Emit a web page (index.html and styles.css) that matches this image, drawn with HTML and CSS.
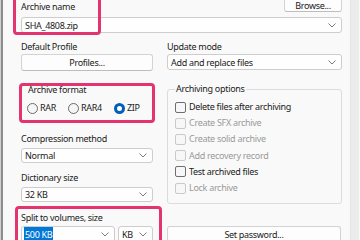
FILE: index.html
```html
<!DOCTYPE html>
<html>
<head>
<meta charset="utf-8">
<link rel="stylesheet" href="styles.css">
</head>
<body>
<div class="window">
  <div class="dialog">
    <div class="toprow">
      <span class="label">Archive name</span>
      <button class="btn browse">Browse...</button>
    </div>
    <div class="combo name"><span class="val">SHA_4808.zip</span><svg class="chev" width="8" height="5" viewBox="0 0 8 5"><polyline points="0.5,0.5 4,4 7.5,0.5" fill="none" stroke="#7a7a7a" stroke-width="1"/></svg></div>
    <div class="cols">
      <div class="col">
        <div class="label">Default Profile</div>
        <button class="btn profiles">Profiles...</button>
        <fieldset class="group fmt">
          <legend>Archive format</legend>
          <div class="radios">
            <span class="radio"><span class="circle"></span>RAR</span>
            <span class="radio"><span class="circle"></span>RAR4</span>
            <span class="radio"><span class="circle on"></span>ZIP</span>
          </div>
        </fieldset>
        <div class="label cm">Compression method</div>
        <div class="combo c1"><span class="val">Normal</span><svg class="chev" width="8" height="5" viewBox="0 0 8 5"><polyline points="0.5,0.5 4,4 7.5,0.5" fill="none" stroke="#7a7a7a" stroke-width="1"/></svg></div>
        <div class="label ds">Dictionary size</div>
        <div class="combo c2"><span class="val">32 KB</span><svg class="chev" width="8" height="5" viewBox="0 0 8 5"><polyline points="0.5,0.5 4,4 7.5,0.5" fill="none" stroke="#7a7a7a" stroke-width="1"/></svg></div>
        <div class="label sv">Split to volumes, size</div>
        <div class="splitrow">
          <div class="combo size"><span class="val"><span class="sel">500 KB</span></span><svg class="chev" width="8" height="5" viewBox="0 0 8 5"><polyline points="0.5,0.5 4,4 7.5,0.5" fill="none" stroke="#7a7a7a" stroke-width="1"/></svg></div>
          <div class="combo unit"><span class="val">KB</span><svg class="chev" width="8" height="5" viewBox="0 0 8 5"><polyline points="0.5,0.5 4,4 7.5,0.5" fill="none" stroke="#7a7a7a" stroke-width="1"/></svg></div>
        </div>
      </div>
      <div class="col">
        <div class="label">Update mode</div>
        <div class="combo upd"><span class="val">Add and replace files</span><svg class="chev" width="8" height="5" viewBox="0 0 8 5"><polyline points="0.5,0.5 4,4 7.5,0.5" fill="none" stroke="#7a7a7a" stroke-width="1"/></svg></div>
        <fieldset class="group opts">
          <legend>Archiving options</legend>
          <div class="check"><span class="box"></span>Delete files after archiving</div>
          <div class="check off"><span class="box"></span>Create SFX archive</div>
          <div class="check off"><span class="box"></span>Create solid archive</div>
          <div class="check off"><span class="box"></span>Add recovery record</div>
          <div class="check"><span class="box"></span>Test archived files</div>
          <div class="check off"><span class="box"></span>Lock archive</div>
        </fieldset>
        <button class="btn pwd">Set password...</button>
      </div>
    </div>
  </div>
  <div class="strip"></div>
  <div class="hl hl-name"></div>
  <div class="hl hl-fmt"></div>
  <div class="hl hl-split"></div>
</div>
</body>
</html>
```

FILE: styles.css
```css
html, body {
  margin: 0;
  padding: 0;
}
body {
  width: 360px;
  height: 240px;
  overflow: hidden;
  background: #f9f9f9;
  font-family: "Noto Sans", "Open Sans", sans-serif;
  font-size: 9px;
  letter-spacing: -0.3px;
  color: #1b1b1b;
}
.window {
  position: relative;
  width: 360px;
  height: 240px;
  display: flex;
  border-left: 1px solid #cfcfcf;
  box-sizing: border-box;
}
.dialog {
  border-left: 2px solid #8d8d8d;
  width: 349px;
  box-sizing: border-box;
  padding-left: 18px;
  margin-top: -5px;
  background: #f9f9f9;
}
.strip {
  width: 8px;
  border-left: 1px solid #e4e4e4;
  background: #ececec;
  flex: none;
}
.label {
  line-height: 12px;
  height: 12px;
  white-space: nowrap;
}
.toprow {
  width: 321px;
  height: 17px;
  display: flex;
  justify-content: space-between;
}
.toprow .label {
  padding-top: 6px;
}
.btn {
  font: inherit;
  letter-spacing: inherit;
  color: inherit;
  background: #fdfdfd;
  border: 1px solid #d3d3d3;
  border-bottom-color: #bdbdbd;
  border-radius: 3px;
  padding: 0;
  margin: 0;
  height: 17px;
  box-sizing: border-box;
  line-height: 15px;
  display: block;
}
.browse {
  width: 58px;
  line-height: 9px;
  padding-top: 4px;
}
.combo {
  display: flex;
  align-items: center;
  justify-content: space-between;
  height: 15px;
  box-sizing: border-box;
  background: #fefefe;
  border: 1px solid #cdcdcd;
  border-radius: 3px;
  padding: 0 5px 0 3px;
  line-height: 13px;
  white-space: nowrap;
}
.combo.name {
  width: 321px;
  height: 16px;
  margin-top: 5px;
}
.chev {
  display: block;
  flex: none;
}
.cols {
  display: grid;
  grid-template-columns: 132px 175px;
  column-gap: 14px;
  margin-top: 8px;
}
.col {
  display: flex;
  flex-direction: column;
}
.profiles {
  margin-top: 1px;
  width: 132px;
}
.upd {
  margin-top: 1px;
  height: 16px;
}
.group {
  margin: 0;
  border: 1px solid #dcdcdc;
  border-radius: 3px;
  min-width: 0;
}
.group legend {
  padding: 0 1px;
  line-height: 12px;
  height: 12px;
}
.fmt {
  margin-top: 13px;
  padding: 0 5px 6px 5px;
  height: 37px;
  box-sizing: border-box;
  border-color: transparent;
}
.radios {
  display: flex;
  margin-top: 6px;
  line-height: 12px;
}
.radio {
  display: flex;
  align-items: center;
  margin-right: 12px;
}
.circle {
  width: 11px;
  height: 11px;
  box-sizing: border-box;
  border-radius: 50%;
  border: 1px solid #6a6a6a;
  background: #f6f6f6;
  margin-right: 2px;
  flex: none;
}
.circle.on {
  border: 3px solid #005fb8;
  background: #ffffff;
}
.cm {
  margin-top: 12px;
}
.c1 {
  margin-top: 3px;
}
.ds {
  margin-top: 9px;
}
.c2 {
  margin-top: 3px;
}
.sv {
  margin-top: 10px;
}
.splitrow {
  display: flex;
  margin-top: 2px;
  gap: 3px;
}
.size {
  width: 94px;
  height: 17px;
  padding-left: 2px;
}
.unit {
  width: 35px;
  height: 17px;
}
.sel {
  background: #0078d7;
  color: #ffffff;
  padding: 1px 1px;
}
.opts {
  margin-top: 13px;
  padding: 0 7px 7px 7px;
}
.check {
  display: flex;
  align-items: center;
  height: 16.2px;
  line-height: 12px;
  white-space: nowrap;
}
.opts legend + .check {
  margin-top: 4px;
}
.box {
  width: 11px;
  height: 11px;
  box-sizing: border-box;
  border: 1px solid #6e6e6e;
  border-radius: 2px;
  background: #f7f7f7;
  margin-right: 3px;
  flex: none;
}
.check.off {
  color: #9a9a9a;
}
.check.off .box {
  border-color: #cacaca;
}
.pwd {
  margin-top: 22px;
  width: 174px;
}
.hl {
  position: absolute;
  border: 3px solid #e43470;
  border-radius: 4px;
  box-sizing: border-box;
}
.hl-name {
  left: 12px;
  top: -4px;
  width: 88px;
  height: 39px;
}
.hl-fmt {
  left: 18px;
  top: 83px;
  width: 136px;
  height: 40px;
}
.hl-split {
  left: 14px;
  top: 206px;
  width: 147px;
  height: 50px;
}
```
